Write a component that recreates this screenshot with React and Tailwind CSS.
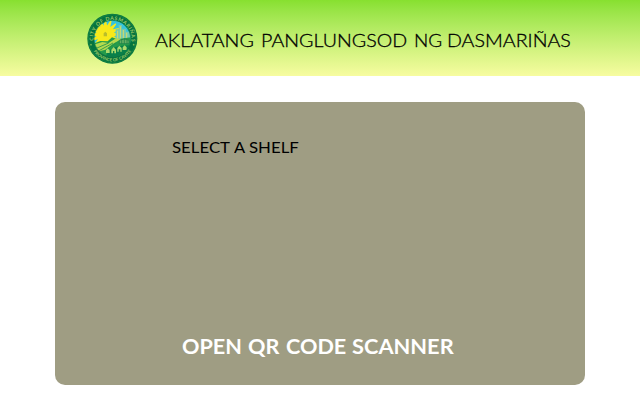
const rays = Array.from({ length: 16 }, (_, i) => i * 22.5);

function Seal() {
  return (
    <svg viewBox="0 0 180 180" className="block size-[60px] shrink-0">
      <defs>
        <clipPath id="field"><circle cx="91" cy="92" r="55" /></clipPath>
        <path id="upper" d="M34.500 104a57.500 57.500 0 1 1 113 0" />
        <path id="lower" d="M23 92a68 68 0 0 0 136 0" />
      </defs>
      <circle cx="91" cy="92" r="75" fill="#05743f" />
      <circle cx="91" cy="92" r="72" fill="none" stroke="#1d8a46" strokeWidth="2" />
      <g clipPath="url(#field)">
        <rect x="30" y="30" width="122" height="80" fill="#35c4dc" />
        <g fill="#f7e91b">
          {rays.map((a) => (
            <path key={a} d="M70 35l4 22h-8z" transform={`rotate(${a} 70 79)`} stroke="#f7e91b" strokeWidth="4" />
          ))}
          <circle cx="70" cy="79" r="27" />
        </g>
        <path d="M65 85v-9l5-5 5 5v9z" fill="#b9bd2b" />
        <path d="M101 94V64h9V51h10v11h12v9h16v30h-47z" fill="#72cbb0" />
        <path d="M107 68v24m8-37v37m9-26v28m10-20v20" stroke="#d5dc68" strokeWidth="3" />
        <path d="M32 108l23-9 22 1 13-12 16 6 44-7v65H32z" fill="#259c4a" />
        <path d="M34 110l27-8 19 3 22-14 16 2-27 16-21 16-30 8z" fill="#b5d94e" />
        <path d="M38 123l42-18m-36 27 49-27m-40 36 49-36" stroke="#20914a" strokeWidth="2.500" />
        <path d="M72 145c5-23 28-33 73-33l-4 24-31 14z" fill="#08804a" />
        <path d="M112 97q15-8 29 0v10h-29zm7-3v13m8-15v15m8-13v13" fill="#65ae62" stroke="#147c47" strokeWidth="2" />
        <path d="M88 136v-11l7-8 7 8v11h-5v-7h-4v7zm18-5v-11l6-7 7 7v11h-4v-7h-5v7zm-34 4v-8l5-6 6 6v8zm50-9v-8l6-6 6 6v8z" fill="#a9d96b" />
      </g>
      <circle cx="91" cy="92" r="55" fill="none" stroke="#117747" strokeWidth="2" />
      <g fill="#9cc964" fontFamily="Lato, sans-serif" fontWeight="700">
        <text fontSize="15.5"><textPath href="#upper" textLength="192" startOffset="6">CITY OF DASMARIÑAS</textPath></text>
        <text fontSize="13"><textPath href="#lower" textLength="134" startOffset="40">PROVINCE OF CAVITE</textPath></text>
      </g>
      <circle cx="27" cy="110" r="2.500" fill="#83bc55" />
      <circle cx="155" cy="110" r="2.500" fill="#83bc55" />
    </svg>
  );
}

export default function App() {
  return (
    <div className="h-[410px] w-[640px] overflow-hidden bg-white font-['Lato',sans-serif] text-black">
      <header className="flex h-[76px] items-start bg-linear-to-b from-[#87e02f] to-[#f7fca0] pt-2 pl-[82px]">
        <Seal />
        <h1 className="ml-[13px] flex gap-[7px] pt-[18px] text-[18px] leading-7 font-light whitespace-nowrap [-webkit-text-stroke:0.3px_black]">
          <span className="w-[99px] origin-left scale-x-[1.09]">AKLATANG</span>
          <span className="w-[146px] origin-left scale-x-[1.09]">PANGLUNGSOD</span>
          <span className="w-[26px] origin-left scale-x-[1.05]">NG</span>
          <span className="w-[124px] origin-left scale-x-[1.09]">DASMARIÑAS</span>
        </h1>
      </header>
      <main className="mx-[55px] mt-[26px] flex h-[283px] flex-col justify-between rounded-[10px] bg-[#9f9d83]">
        <p className="flex gap-1 pt-[34px] pl-[117px] text-[15px] leading-[22px] whitespace-nowrap">
          <span className="w-[58px] origin-left scale-x-[1.12]">SELECT</span>
          <span className="w-[11px] origin-left scale-x-[1.1]">A</span>
          <span className="w-[50px] origin-left scale-x-[1.12]">SHELF</span>
        </p>
        <button className="flex gap-[6px] pb-[25px] pl-[127px] text-left text-[20px] leading-7 font-bold whitespace-nowrap text-white">
          <span className="w-[60px] origin-left scale-x-[1.08]">OPEN</span>
          <span className="w-[32px] origin-left scale-x-[1.08]">QR</span>
          <span className="w-[60px] origin-left scale-x-[1.08]">CODE</span>
          <span className="w-[102px] origin-left scale-x-[1.09]">SCANNER</span>
        </button>
      </main>
    </div>
  );
}
